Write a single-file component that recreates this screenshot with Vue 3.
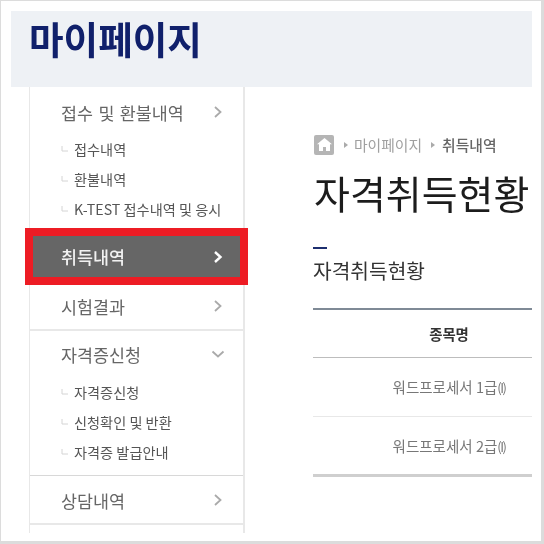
<script setup>
const groups = [
  { title: '접수 및 환불내역', icon: 'right', subs: ['접수내역', '환불내역', 'K-TEST 접수내역 및 응시'], cls: 'g1' },
  { title: '취득내역', icon: 'right', subs: [], cls: 'active' },
  { title: '시험결과', icon: 'right', subs: [], cls: 'g3' },
  { title: '자격증신청', icon: 'down', subs: ['자격증신청', '신청확인 및 반환', '자격증 발급안내'], cls: 'g4' },
  { title: '상담내역', icon: 'right', subs: [], cls: 'g5' },
]
const rows = ['워드프로세서 1급', '워드프로세서 2급']
</script>

<template>
  <div class="frame">
    <div class="inner">
      <header class="band"><h1>마이페이지</h1></header>
      <div class="body">
        <nav class="side">
          <section v-for="g in groups" :key="g.title" class="group" :class="g.cls">
            <div class="head">
              <span class="label">{{ g.title }}</span>
              <svg class="chev" width="14" height="14" viewBox="0 0 14 14">
                <path v-if="g.icon === 'right'" d="M4 2l5.5 5L4 12" />
                <path v-else d="M1.5 4.5L7 9.5l5.5-5" />
              </svg>
            </div>
            <ul v-if="g.subs.length" class="subs">
              <li v-for="s in g.subs" :key="s">
                <svg class="tick" width="8" height="6" viewBox="0 0 8 6"><path d="M1 0v5h6" /></svg>
                <span>{{ s }}</span>
              </li>
            </ul>
          </section>
        </nav>
        <main class="main">
          <div class="crumb">
            <span class="home">
              <svg width="15" height="13" viewBox="0 0 15 13"><path d="M7.5 0L15 6.2h-2V13H9V9H6v4H2V6.2H0z" /></svg>
            </span>
            <i class="arrow"></i><span>마이페이지</span>
            <i class="arrow wide"></i><b>취득내역</b>
          </div>
          <h2>자격취득현황</h2>
          <div class="dash"></div>
          <h3>자격취득현황</h3>
          <table>
            <thead><tr><th>종목명</th></tr></thead>
            <tbody>
              <tr v-for="r in rows" :key="r"><td>{{ r }}<span class="paren">(I)</span></td></tr>
            </tbody>
          </table>
        </main>
      </div>
    </div>
  </div>
</template>

<style>
html, body { margin: 0; background: #fff; }
</style>

<style scoped>
* { box-sizing: border-box; }
.frame {
  width: 544px;
  height: 544px;
  border: solid #dcdcdc;
  border-width: 1px 3px 3px 1px;
  padding: 10px 9px 8px 10px;
  overflow: hidden;
  font-family: "Noto Sans CJK KR", "Noto Sans", sans-serif;
  background: #fff;
}
.inner { height: 100%; overflow: hidden; filter: blur(0.6px); }
.band {
  height: 76px;
  background: #eef1f5;
  padding: 5px 0 0 18px;
}
h1 {
  margin: 0;
  font-size: 37.6px;
  line-height: 44px;
  font-weight: 700;
  color: #10206b;
}
.body { display: flex; height: 446px; }
.side {
  width: 216px;
  margin-left: 18px;
  border: solid #e8e8e8;
  border-width: 0 2px 0 1px;
  flex: none;
}
.group { padding: 0 18px 0 31px; }
.head {
  display: flex;
  justify-content: space-between;
  align-items: center;
  height: 24px;
  font-size: 17.4px;
  word-spacing: 1.5px;
  color: #666;
  white-space: nowrap;
}
.chev { flex: none; }
.chev path { fill: none; stroke: #aaa; stroke-width: 1.8; }
.subs { list-style: none; margin: 10px 0 0; padding: 0; }
.subs li {
  display: flex;
  align-items: center;
  height: 30px;
  font-size: 14.2px;
  color: #555;
  white-space: nowrap;
}
.tick { margin-right: 5px; flex: none; }
.tick path { fill: none; stroke: #d4d4d4; stroke-width: 1; }
.g1 { padding-top: 13px; height: 141px; }
.active {
  height: 57px;
  margin: 0 -5px 0 -5px;
  border: 8px solid #ed1c24;
  background: #666;
  padding: 0 15px 0 28px;
  display: flex;
  flex-direction: column;
  justify-content: center;
}
.active .head { color: #f1f1f1; font-weight: 500; }
.active .chev path { stroke: #fff; stroke-width: 2.4; }
.g3 { height: 46px; padding-top: 9px; border-bottom: 2px solid #e8e8e8; }
.g4 { height: 145px; padding-top: 11px; border-bottom: 1px solid #d8d8d8; }
.g4 .subs { margin-top: 11px; }
.g5 { height: 49px; padding-top: 12px; border-bottom: 2px solid #e8e8e8; }
.main { flex: 1; min-width: 0; padding: 47px 0 0 68px; overflow: hidden; }
.crumb {
  display: flex;
  align-items: center;
  height: 21px;
  margin-left: 1px;
  font-size: 14.8px;
  color: #a0a0a0;
  white-space: nowrap;
}
.crumb b { font-weight: 500; color: #666; }
.home {
  width: 20px;
  height: 20px;
  background: #b5b5b5;
  border-radius: 2px;
  display: flex;
  align-items: center;
  justify-content: center;
}
.home path { fill: #fff; }
.arrow {
  width: 0;
  height: 0;
  border: solid transparent;
  border-width: 3px 0 3px 4px;
  border-left-color: #aaa;
  margin: 0 6px 0 10px;
}
.arrow.wide { margin: 0 7px 0 9px; }
h2 {
  margin: 13px 0 0 1px;
  font-size: 39px;
  line-height: 48px;
  font-weight: 400;
  color: #1c1c1c;
  white-space: nowrap;
}
.dash { width: 14px; height: 2px; background: #1d2f6f; margin-top: 31px; }
h3 {
  margin: 8px 0 0;
  font-size: 20.3px;
  line-height: 26px;
  font-weight: 400;
  color: #333;
  white-space: nowrap;
}
table {
  width: 272px;
  margin-top: 25px;
  border-collapse: collapse;
  border-top: 2px solid #7f8a96;
  border-bottom: 3px solid #cfcfcf;
}
th {
  height: 48px;
  font-size: 14.4px;
  font-weight: 700;
  color: #333;
  border-bottom: 1px solid #bdbdbd;
}
td {
  height: 59px;
  text-align: center;
  font-size: 14.5px;
  color: #777;
  border-bottom: 1px solid #e8e8e8;
}
tr:last-child td { border-bottom: 0; }
.paren { letter-spacing: -1.5px; font-size: 13px; }
</style>
